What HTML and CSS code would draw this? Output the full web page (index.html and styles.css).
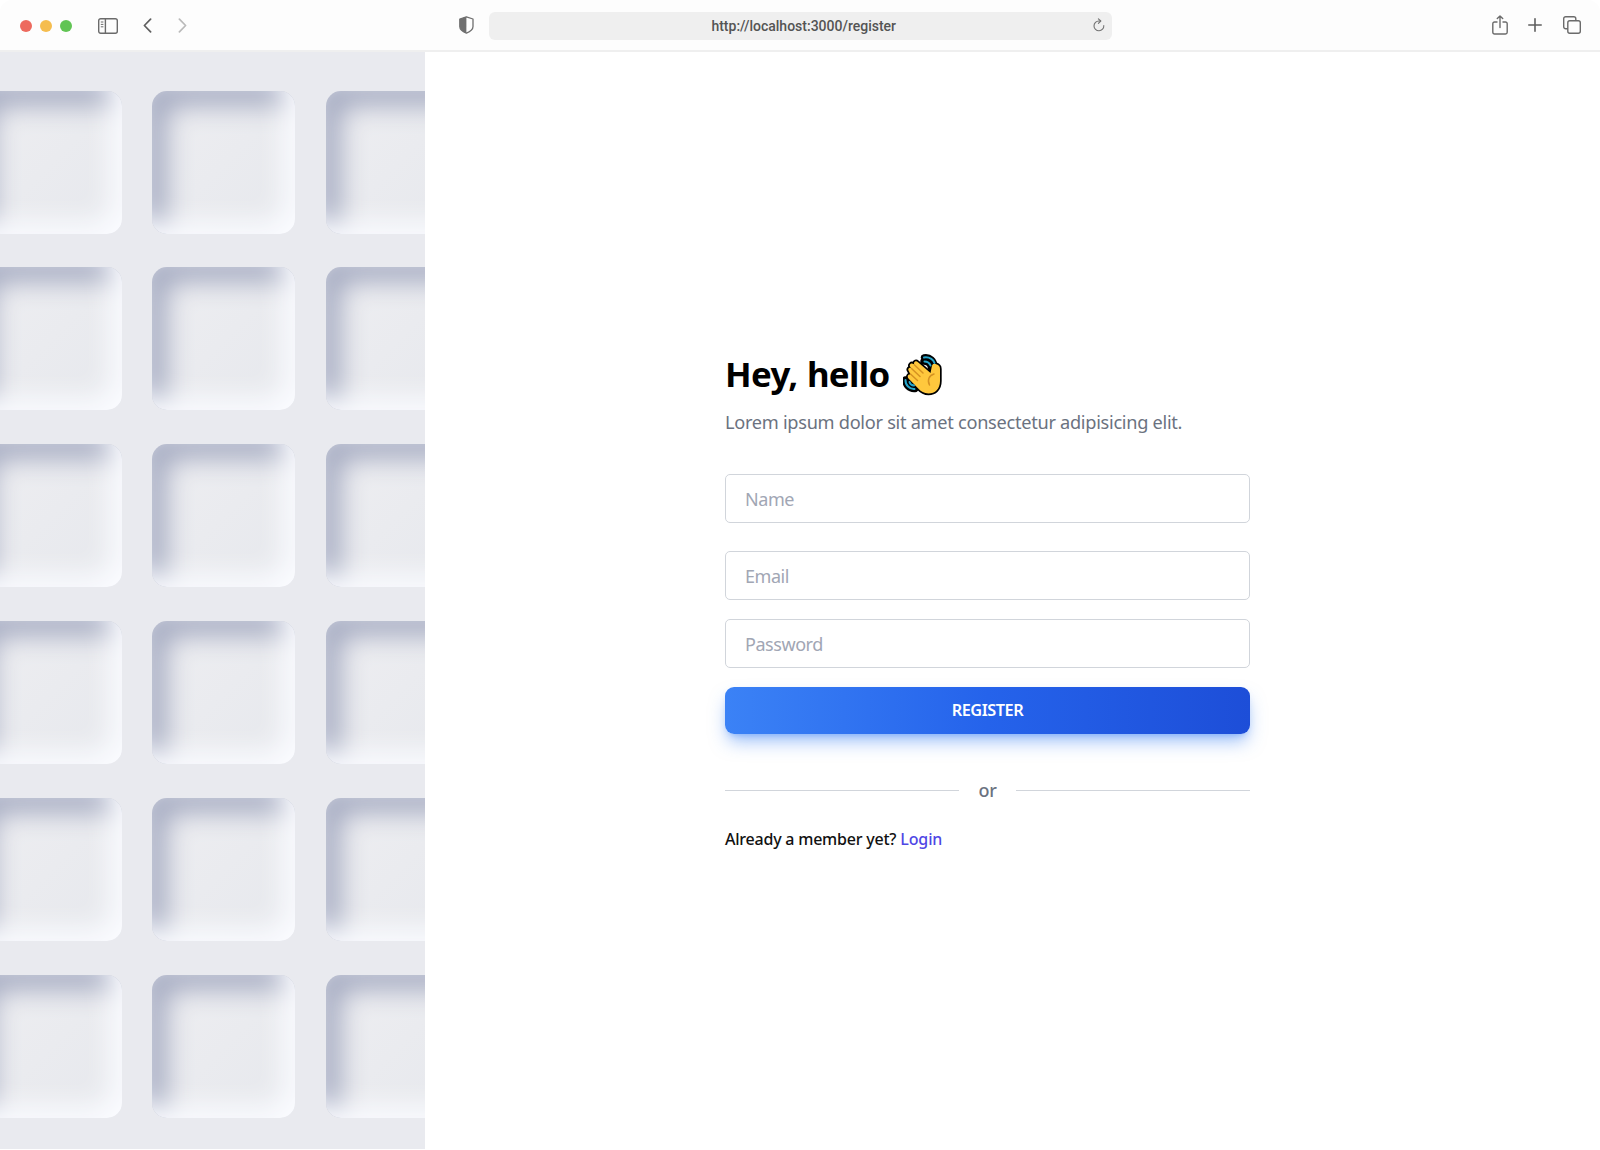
FILE: index.html
```html
<!DOCTYPE html>
<html lang="en">
<head>
<meta charset="utf-8">
<title>Register</title>
<link rel="stylesheet" href="styles.css">
</head>
<body>
<div class="window">
  <header class="toolbar">
    <div class="toolbar-left">
      <div class="lights">
        <span class="light light-close"></span>
        <span class="light light-min"></span>
        <span class="light light-max"></span>
      </div>
      <svg class="icon-sidebar" width="20" height="16" viewBox="0 0 20 16" fill="none" stroke="#6b6b6b" stroke-width="1.4"><rect x=".7" y=".7" width="18.6" height="14.6" rx="2"/><path d="M7.4 .7v14.6"/><path d="M2.8 4h2.6M2.8 6.4h2.6M2.8 8.8h2.6" stroke-width="1"/></svg>
      <svg class="icon-back" width="9" height="15" viewBox="0 0 9 15" fill="none" stroke="#5f5f5f" stroke-width="1.7" stroke-linecap="round" stroke-linejoin="round"><path d="M7.6 1.2 1.4 7.5l6.2 6.3"/></svg>
      <svg class="icon-forward" width="9" height="15" viewBox="0 0 9 15" fill="none" stroke="#bababa" stroke-width="1.7" stroke-linecap="round" stroke-linejoin="round"><path d="m1.4 1.2 6.2 6.3-6.2 6.3"/></svg>
    </div>
    <div class="toolbar-center">
      <svg width="15" height="18" viewBox="0 0 15 18"><path d="M7.4.8 14 3v7.4c0 3-3 5.3-6.6 6.8C3.8 15.7.8 13.4.8 10.4V3z" fill="none" stroke="#6f6f6f" stroke-width="1.3" stroke-linejoin="round"/><path d="M7.4.8.8 3v7.4c0 3 3 5.3 6.6 6.8z" fill="#6f6f6f"/></svg>
      <div class="address">
        <span class="url">http://localhost:3000/register</span>
        <svg class="icon-reload" width="12" height="14" viewBox="0 0 12 14" fill="none" stroke="#727272" stroke-width="1.1" stroke-linecap="round" stroke-linejoin="round"><path d="M10.8 7.6A4.9 4.9 0 1 1 6 3h1.600"/><path d="M5.400.8 7.800 3 5.400 5.300"/></svg>
      </div>
    </div>
    <div class="toolbar-right">
      <svg width="16" height="20" viewBox="0 0 16 20" fill="none" stroke="#6b6b6b" stroke-width="1.4" stroke-linecap="round" stroke-linejoin="round"><path d="M5 7H2.500A1.700 1.700 0 0 0 .8 8.700v8.600A1.700 1.700 0 0 0 2.500 19h11a1.700 1.700 0 0 0 1.700-1.700V8.700A1.700 1.700 0 0 0 13.500 7H11"/><path d="M8 12.500V1M5.300 3.500 8 .9l2.700 2.600"/></svg>
      <svg width="14" height="14" viewBox="0 0 14 14" stroke="#5f5f5f" stroke-width="1.6" stroke-linecap="round"><path d="M7 .8v12.400M.8 7h12.400"/></svg>
      <svg class="icon-tabs" width="18" height="18" viewBox="0 0 18 18" fill="none" stroke="#6b6b6b" stroke-width="1.4" stroke-linejoin="round"><path d="M4.800 12.800H2.700a2 2 0 0 1-2-2V2.700a2 2 0 0 1 2-2h8.100a2 2 0 0 1 2 2v2.100"/><rect x="4.800" y="4.800" width="12.500" height="12.500" rx="2"/></svg>
    </div>
  </header>
  <main class="page">
    <aside class="pattern">
      <div class="tile"></div><div class="tile"></div><div class="tile"></div>
      <div class="tile"></div><div class="tile"></div><div class="tile"></div>
      <div class="tile"></div><div class="tile"></div><div class="tile"></div>
      <div class="tile"></div><div class="tile"></div><div class="tile"></div>
      <div class="tile"></div><div class="tile"></div><div class="tile"></div>
      <div class="tile"></div><div class="tile"></div><div class="tile"></div>
    </aside>
    <section class="content">
      <form class="form">
        <h1 class="title"><span class="title-text">Hey, hello</span>
          <svg class="wave" width="40" height="42" viewBox="0 0 40 42" stroke-linecap="round" stroke-linejoin="round" fill="none">
            <g stroke="#000" stroke-width="6.5"><path d="M21 3.500c6-1 10 3 10.500 9M20.500 7.500c4 0 7 2 7.500 6"/><path d="M2.500 25.500c-.5 5.500 4 10 9.500 9.500M6.500 25.500c0 3.500 2.500 6 6 6"/></g>
            <path d="M5.800 17c-1.500-1.500.2-4.500 2.700-2.800l-1-1c-2-2.200.6-5 3-3.200l1 .8c-1.600-2.300 1.200-4.700 3.200-2.800L27.500 19l1.200-6c.7-3 1.500-3.500 3.800-3 3 .8 4.500 2 4.500 5V27c0 8-5 12.500-11.500 12.500-4.500 0-7.500-2-10.500-5.200L5.500 24.500c-1.800-2-.1-4.700 2.100-3.700z" fill="#ffc83d" stroke="#000" stroke-width="3.4"/>
            <path d="M5.800 17c-1.500-1.500.2-4.500 2.700-2.800l-1-1c-2-2.200.6-5 3-3.200l1 .8c-1.600-2.300 1.200-4.700 3.200-2.800L27.500 19l1.200-6c.7-3 1.500-3.500 3.800-3 3 .8 4.500 2 4.500 5V27c0 8-5 12.500-11.500 12.500-4.500 0-7.500-2-10.500-5.200L5.500 24.500c-1.800-2-.1-4.700 2.100-3.700z" fill="#ffc83d"/>
            <path d="m11.500 11 8.500 8M8.500 14.500l8.500 8M7.500 20l7 6.500M31 20c-5 1.500-7 6-4.500 11" stroke="#d69222" stroke-width="1.5"/>
            <path d="M21 3.500c6-1 10 3 10.500 5.500M21.500 7.500c3 0 5 1.500 6 4M2.500 26c-.2 5 4 9.300 9 9M6.500 28c.5 2 2.500 3.400 4.500 3.500" stroke="#26a6cc" stroke-width="2"/>
          </svg>
        </h1>
        <p class="subtitle">Lorem ipsum dolor sit amet consectetur adipisicing elit.</p>
        <input class="field field-name" type="text" placeholder="Name">
        <input class="field" type="email" placeholder="Email">
        <input class="field" type="password" placeholder="Password">
        <button class="submit" type="button">REGISTER</button>
        <div class="divider"><span class="divider-text">or</span></div>
        <p class="member">Already a member yet? <a class="login">Login</a></p>
      </form>
    </section>
  </main>
</div>
</body>
</html>
```
FILE: styles.css
```css
* { box-sizing: border-box; }
body { margin: 0; background: #fff; font-family: "Noto Sans", "Open Sans", sans-serif; }
svg { display: block; flex: none; }
.window { width: 1600px; height: 1149px; overflow: hidden; display: flex; flex-direction: column; }
.toolbar { height: 52px; flex: none; display: grid; grid-template-columns: 458.5px 653px 1fr; background: #fdfdfd; border-bottom: 2px solid #efefef; border-radius: 12px 12px 0 0; }
.toolbar-left { display: flex; align-items: center; padding-left: 20px; }
.lights { display: flex; gap: 8px; padding-top: 2px; }
.light { width: 12px; height: 12px; border-radius: 50%; }
.light-close { background: #ed6a5e; }
.light-min { background: #f5bd4f; }
.light-max { background: #61c454; }
.icon-sidebar { margin: 1px 0 0 26px; }
.icon-back { margin-left: 24.5px; }
.icon-forward { margin-left: 26px; }
.toolbar-center { display: flex; align-items: center; gap: 15.5px; }
.address { flex: 1; height: 28px; margin-top: 2px; border-radius: 6px; background: #efefef; display: flex; align-items: center; padding-right: 7px; }
.url { flex: 1; padding: 0 0 0 26px; text-align: center; font: 500 14px/20px Roboto, sans-serif; color: #545454; }
.icon-reload { margin-top: -2px; }
.toolbar-right { display: flex; align-items: center; justify-content: flex-end; gap: 20px; padding-right: 19px; }
.icon-tabs { margin-left: 1px; }
.page { flex: 1; min-height: 0; display: grid; grid-template-columns: 425px 1fr; }
.pattern { overflow: hidden; background: #e9eaef; display: grid; grid-template-columns: repeat(3, 143px); grid-auto-rows: 143px; gap: 33.8px 30.5px; padding-top: 38.7px; }
.tile { margin-left: -21.3px; width: 143px; border-radius: 15px; background: linear-gradient(135deg, #eeeef1, #e6e8ed); box-shadow: inset -12px -12px 26px #fbfcff, inset 15px 15px 26px #a7adc3; }
.content { display: flex; justify-content: center; padding: 300px 50px 0 0; }
.form { width: 525px; display: flex; flex-direction: column; }
.title { margin: 0; height: 46px; display: flex; align-items: center; gap: 13.5px; font-size: 34.8px; line-height: 44px; font-weight: 700; color: #000; }
.title-text { letter-spacing: -0.65px; word-spacing: 1px; padding-bottom: 2px; }
.subtitle { margin: 10px 0 0; font-size: 18.2px; line-height: 28px; letter-spacing: -0.29px; color: #6b7280; white-space: nowrap; }
.field { width: 100%; height: 49px; margin: 0 0 19px; padding: 0 19px; border: 1px solid #d1d5db; border-radius: 5px; background: #fff; font: 18px "Noto Sans", sans-serif; letter-spacing: -0.45px; outline: none; }
.field::placeholder { color: #a1a6b4; opacity: 1; }
.field-name { margin: 38px 0 28px; }
.submit { height: 47px; border: 0; padding: 0 0 2px; border-radius: 9px; color: #fff; font: 600 16.3px "Noto Sans", sans-serif; letter-spacing: -0.45px; background: linear-gradient(to right, #3b82f6, #2563eb 50%, #1d4ed8); box-shadow: 0 10px 18px -3px rgba(59,130,246,.5), 0 4px 7px -4px rgba(59,130,246,.5); }
.divider { display: flex; align-items: center; gap: 19.5px; height: 28px; margin-top: 42px; }
.divider::before, .divider::after { content: ""; flex: 1; height: 1px; background: #d1d5db; }
.divider-text { font-size: 18px; line-height: 28px; font-weight: 500; letter-spacing: -0.3px; color: #6b7280; }
.member { margin: 22px 0 0; font-size: 16px; line-height: 26px; font-weight: 500; letter-spacing: -0.22px; color: #111; }
.login { color: #4f46e5; letter-spacing: -0.1px; }
```
